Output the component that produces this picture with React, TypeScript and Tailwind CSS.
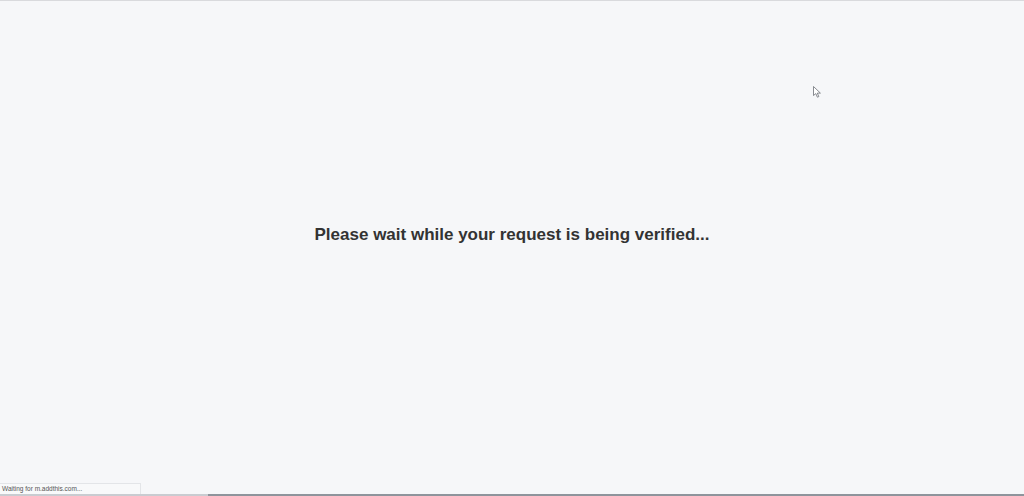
export default function App() {
    return (
        <div className="relative flex h-[496px] w-full flex-col overflow-hidden bg-[#f6f7f9] font-['Liberation_Sans',Arial,sans-serif]">
            <div className="h-px w-full bg-[#d9dadd]"/>
            <main className="flex flex-1 items-start justify-center pt-[223px]">
                <h1 className="text-[17px] font-bold leading-[22px] text-[#333333]">
                    Please wait while your request is being verified...
                </h1>
            </main>
            <div className="flex h-[2px] w-full">
                <div className="w-[208px] bg-[#c9ccd1]"/>
                <div className="flex-1 bg-[#8e949c]"/>
            </div>

            {/* status bubble */}
            <div className="absolute bottom-[2px] left-0 h-[11px] w-[141px] border-r border-t border-[#e3e5e8] bg-[#f8f9fa] pl-[2px] text-[6.5px] leading-[10px] text-[#555555]">
                Waiting for m.addthis.com...
            </div>

            {/* mouse cursor */}
            <svg className="absolute left-[813px] top-[86px]" width="9" height="12" viewBox="0 0 9 12">
                <path d="M0.5 0.5 L0.5 9.5 L2.8 7.6 L4.4 11.2 L5.8 10.6 L4.3 7.1 L7.4 7.1 Z" fill="#ffffff" stroke="#6b6f75" strokeWidth="0.8" strokeLinejoin="round"/>
            </svg>
        </div>
    )
}
